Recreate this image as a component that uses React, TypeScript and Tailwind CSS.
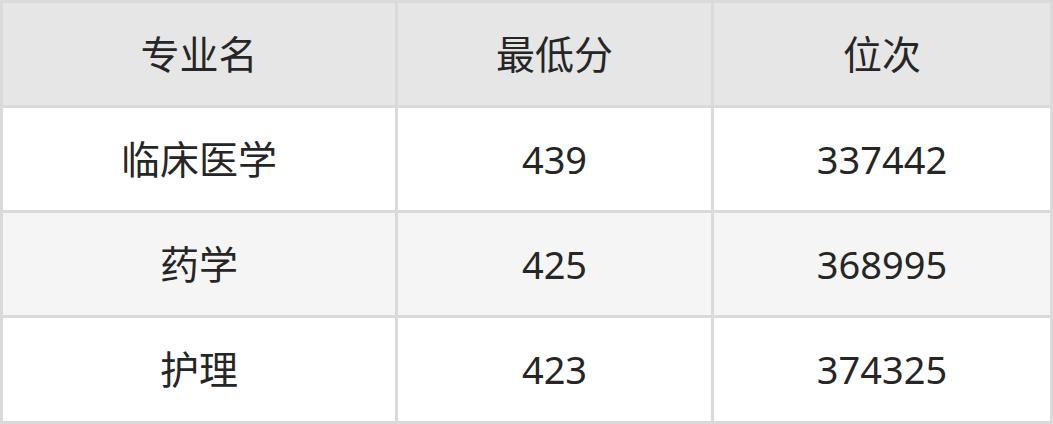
const rows = [
  ["临床医学", "439", "337442"],
  ["药学", "425", "368995"],
  ["护理", "423", "374325"],
];

export default function App() {
  return (
    <div
      className="w-[1053px] h-[424px] bg-[#dadada] p-[3px] grid grid-cols-[392px_313px_336px] grid-rows-[102px_102px_102px_103px] gap-[3px] text-[#262626]"
      style={{ fontFamily: '"Noto Sans", "Noto Sans CJK SC", sans-serif' }}
    >
      {["专业名", "最低分", "位次"].map((h) => (
        <div key={h} className="bg-[#e6e6e6] flex items-center justify-center text-[39px]">
          {h}
        </div>
      ))}
      {rows.map((r, i) =>
        r.map((c, j) => (
          <div
            key={`${i}-${j}`}
            className={`flex items-center justify-center ${j === 0 ? "text-[39px]" : "text-[38px]"} ${
              i % 2 === 1 ? "bg-[#f5f5f5]" : "bg-white"
            }`}
          >
            {c}
          </div>
        ))
      )}
    </div>
  );
}
